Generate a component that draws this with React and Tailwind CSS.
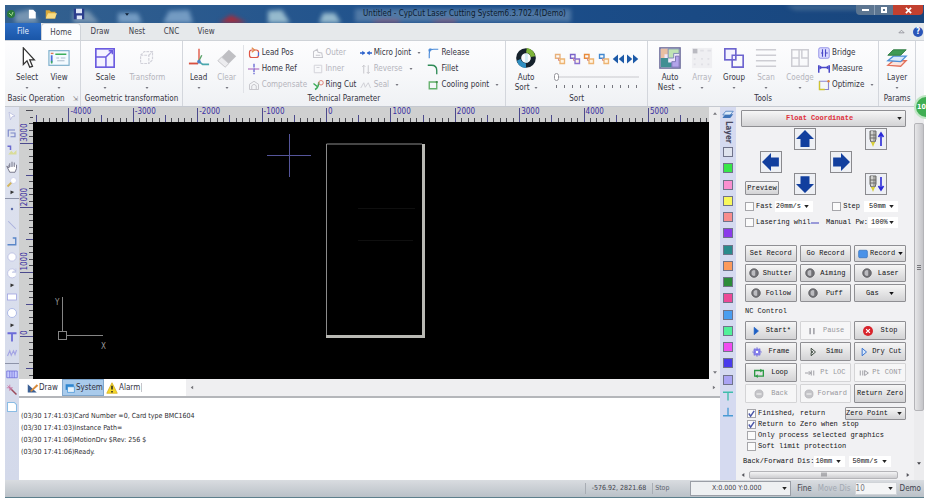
import { useState } from 'react';

const serifMono = "font-['Liberation_Mono',monospace]";

const swatches = [
    ['White', 'bg-[#dfe3ee]'], ['Green', 'bg-[#37e64a]'], ['Pink', 'bg-[#f98fd0]'], ['Yellow', 'bg-[#f8f85e]'],
    ['Salmon', 'bg-[#f88d8d]'], ['Purple', 'bg-[#8a3bea]'], ['Teal', 'bg-[#2a8a8c]'], ['Orange', 'bg-[#fb9a5e]'],
    ['Forest', 'bg-[#2b8b3a]'], ['Magenta', 'bg-[#ec4a98]'], ['Blue', 'bg-[#4a9df0]'], ['Mint', 'bg-[#52f09a]'],
    ['Fuchsia', 'bg-[#f04cf0]'], ['Indigo', 'bg-[#4a3bec]'], ['Lavender', 'bg-[#aaa4f4]'],
];

const logLines = [
    '(03/30 17:41:03)Card Number =0, Card type BMC1604',
    '(03/30 17:41:03)Instance Path=',
    '(03/30 17:41:06)MotionDrv $Rev: 256 $',
    '(03/30 17:41:06)Ready.',
];

function Icon({ box = 16, className = 'size-3', children }) {
    return (
        <svg viewBox={`0 0 ${box} ${box}`} className={`shrink-0 ${className}`} fill="none" aria-hidden="true">
            {children}
        </svg>
    );
}

function Caret({ className = 'h-[3px] w-[5px]' }) {
    return (
        <svg viewBox="0 0 6 4" className={`shrink-0 ${className}`} aria-hidden="true">
            <path d="M0 0h6L3 4z" fill="currentColor" />
        </svg>
    );
}

/* ---------- ribbon ---------- */

function Group({ title, className, children }) {
    return (
        <section className={`flex min-w-0 flex-col border-r border-[#d3d6dc] ${className}`}>
            <div className="flex flex-1 items-start px-1 pt-1">{children}</div>
            <h2 className="pb-[2px] text-center leading-[10px] whitespace-nowrap text-[#34343f]">{title}</h2>
        </section>
    );
}

function BigButton({ label, label2, icon, disabled, className = 'w-8' }) {
    return (
        <button type="button" disabled={disabled} className={`flex flex-col items-center leading-[10px] text-[#34343f] disabled:text-[#b4b4bc] ${className}`}>
            <Icon box={24} className="mb-1 mt-[2px] size-[22px]">{icon}</Icon>
            <span>{label}</span>
            <span className="flex h-[9px] items-center gap-1 leading-[9px]">{label2}<span className="text-[#777780]"><Caret className="h-[2px] w-1" /></span></span>
        </button>
    );
}

function SmallButton({ label, icon, disabled, caret }) {
    return (
        <button type="button" disabled={disabled} className="flex h-4 items-center gap-[2px] whitespace-nowrap leading-[10px] text-[#34343f] disabled:text-[#b4b4bc]">
            <Icon>{icon}</Icon>
            <span>{label}</span>
            {caret && <span className="pl-1 text-[#777780]"><Caret className="h-[2px] w-1" /></span>}
        </button>
    );
}

function Ribbon() {
    return (
        <div className="flex h-[65px] bg-linear-to-b from-[#fdfdfe] via-[#f7f8fa] to-[#eff1f4] pr-2">
            <Group title={<span className="flex items-center justify-center gap-2">Basic Operation<span className="text-[#888] text-[7px]">⇲</span></span>} className="flex-[76_76_0px]">
                <BigButton label="Select" className="w-9" icon={<path d="M8 1v18l4-4 3 7 3-1-3-7h5z" fill="#fff" stroke="#333" strokeWidth="1.4" />} />
                <BigButton label="View" className="w-7" icon={
                    <>
                        <rect x="1" y="4" width="22" height="16" fill="#f3faff" stroke="#7fb0cc" strokeWidth="1.3" />
                        <path d="M4 9v8" stroke="#4a6ee0" strokeWidth="2" />
                        <path d="M8 8h12M4 15v3" stroke="#3cae5b" strokeWidth="1.6" />
                        <path d="M9 12h3m2 0h5M10 15h8" stroke="#a7b6c8" />
                        <path d="M3 7h3" stroke="#e07a5a" strokeWidth="1.5" />
                    </>
                } />
            </Group>
            <Group title="Geometric transformation" className="flex-[101_101_0px]">
                <BigButton label="Scale" className="w-10" icon={
                    <>
                        <rect x="2" y="2" width="20" height="20" stroke="#6b5be0" strokeWidth="1.8" fill="#f4f2ff" />
                        <path d="M2 11h11v11M13 11l7-7M16 4h4v4" stroke="#6b5be0" strokeWidth="1.6" />
                    </>
                } />
                <BigButton label="Transform" disabled className="w-11" icon={
                    <path d="M5 9h9v9H5zM5 9l4-4h9v9l-4 4M14 9l4-4" stroke="#d2d2da" strokeWidth="1.3" strokeDasharray="3 1" />
                } />
            </Group>
            <Group title="Technical Parameter" className="flex-[325_325_0px]">
                <BigButton label="Lead" className="w-6" icon={
                    <>
                        <path d="M12 2v13" stroke="#e2614f" strokeWidth="1.6" />
                        <path d="M1 18h10" stroke="#d9503f" strokeWidth="2" />
                        <path d="M12 15l3-6" stroke="#5aa36a" strokeWidth="1.6" />
                        <path d="M12 16l4 3h7" stroke="#4aa7ad" strokeWidth="1.8" />
                        <circle cx="12" cy="16" r="2" fill="#4a83c9" />
                    </>
                } />
                <BigButton label="Clear" disabled className="w-8" icon={
                    <>
                        <path d="M2 15L14 3l8 7-12 12z" fill="#bfbfc3" />
                        <path d="M2 15l4-4 8 7-4 4z" fill="#ececef" stroke="#c9c9cd" />
                    </>
                } />
                <div className="grid flex-1 grid-cols-[65fr_49fr_69fr_75fr] border-l border-[#e0e2e7] pl-1">
                    <SmallButton label="Lead Pos" icon={<><rect x="2" y="4" width="12" height="10" rx="3" stroke="#e05545" strokeWidth="1.6" /><path d="M5 1l4 3-4 3" stroke="#e08a45" strokeWidth="1.4" /><path d="M14 7v5" stroke="#4a6ee0" strokeWidth="1.5" /></>} />
                    <SmallButton label="Outer" disabled icon={<path d="M2 14V6l5-3 1 4 5 1 1 6zM5 11h6" stroke="#c6c6cc" strokeWidth="1.4" />} />
                    <SmallButton label="Micro Joint" caret icon={<><path d="M0 8h6m4 0h6" stroke="#2b62cc" strokeWidth="2" /><path d="M3 5v6l4-3zM13 5v6l-4-3z" fill="#2b62cc" /></>} />
                    <SmallButton label="Release" icon={<><path d="M3 15V9c0-4 2-6 6-6h6" stroke="#4a8ad8" strokeWidth="1.5" /><path d="M3 3h3M3 3v3" stroke="#4a8ad8" strokeWidth="2" /></>} />
                    <SmallButton label="Home Ref" icon={<><path d="M8 1v14" stroke="#5656cf" strokeWidth="1.6" strokeDasharray="5 1" /><path d="M0 8h16" stroke="#a35ab8" strokeWidth="1.6" strokeDasharray="7 1" /></>} />
                    <SmallButton label="Inner" disabled icon={<path d="M3 3h10v10H3zM6 6h4" stroke="#d3d3d9" strokeWidth="1.3" />} />
                    <SmallButton label="Reverse" disabled caret icon={<path d="M5 14V3m0 0L3 5m2-2l2 2M11 3v11m0 0l-2-2m2 2l2-2" stroke="#c6c6cc" strokeWidth="1.3" />} />
                    <SmallButton label="Fillet" icon={<path d="M1 3h5c5 0 7 3 7 7v5" stroke="#2f8b57" strokeWidth="1.8" />} />
                    <SmallButton label="Compensate" disabled icon={<path d="M2 14V7l6-4 6 4v7zM5 14V9l3-2 3 2v5" stroke="#c6c6cc" strokeWidth="1.3" />} />
                    <SmallButton label="Ring Cut" icon={<><path d="M4 14c4-2 5-6 5-10" stroke="#3cab58" strokeWidth="2" /><path d="M2 6l5 4" stroke="#3cab58" strokeWidth="2" /><circle cx="12" cy="5" r="3" stroke="#df7d72" strokeWidth="1.3" /></>} />
                    <SmallButton label="Seal" disabled caret icon={<path d="M1 12l4-7 2 6 4-6 3 7" stroke="#cfcfd5" strokeWidth="1.3" />} />
                    <SmallButton label="Cooling point" caret icon={<><path d="M3 4h10v9H3z" stroke="#63b06a" strokeWidth="1.8" /><circle cx="13" cy="4" r="1.5" fill="#3f8a4a" /></>} />
                </div>
            </Group>
            <Group title="Sort" className="flex-[142_142_0px]">
                <BigButton label="Auto" label2="Sort" className="w-8" icon={
                    <>
                        <circle cx="12" cy="12" r="8" stroke="#16222c" strokeWidth="5.5" />
                        <path d="M13 1a11 11 0 0 1 9 9l-5 1c0-3-2-4-5-5z" fill="#7fb53a" />
                        <path d="M12 23A11 11 0 0 1 2 15l4-2c1 3 3 4 6 5z" fill="#2f8ec0" />
                        <path d="M10 8l4-1v10h-3V9z" fill="#d4ecf4" />
                    </>
                } />
                <div className="flex flex-1 flex-col pl-3 pr-1 pt-2">
                    <div className="flex justify-between">
                        {['#e8b07a', '#7a62c8', '#e88a3a', '#3f86cf'].map((c, i) => (
                            <button key={c} type="button" aria-label={`Sort order ${i + 1}`}>
                                <Icon>
                                    <path d="M2 2h6v5H2z" stroke={c} strokeWidth="1.8" />
                                    <path d="M6 7v3h4" stroke="#d88a8a" strokeWidth="1.3" />
                                    <path d="M8 8h6v6H8z" stroke={i === 1 ? '#8a72d0' : '#edb472'} strokeWidth="1.8" fill="#fff4e4" />
                                </Icon>
                            </button>
                        ))}
                        <button type="button" aria-label="Previous"><Icon><path d="M8 2v12L1 8zM16 2v12L9 8z" fill="#1d5aa8" /></Icon></button>
                        <button type="button" aria-label="Next"><Icon><path d="M0 2v12l7-6zM8 2v12l7-6z" fill="#1d5aa8" /></Icon></button>
                    </div>
                    <input
                        type="range"
                        aria-label="Sort position"
                        defaultValue="0"
                        className="mt-2 h-2 w-full appearance-none bg-linear-to-b from-transparent from-40% via-[#b9b9bf] via-50% to-transparent to-60% [&::-webkit-slider-thumb]:h-2 [&::-webkit-slider-thumb]:w-[5px] [&::-webkit-slider-thumb]:appearance-none [&::-webkit-slider-thumb]:rounded-sm [&::-webkit-slider-thumb]:border [&::-webkit-slider-thumb]:border-[#96969c] [&::-webkit-slider-thumb]:bg-white"
                    />
                    <div className="mt-1 flex justify-between px-[2px]">
                        {Array.from({ length: 11 }, (_, i) => <i key={i} className="h-[3px] w-px bg-[#77777f]" />)}
                    </div>
                </div>
            </Group>
            <Group title="Tools" className="flex-[232_232_0px]">
                <div className="flex flex-1 justify-between pl-[2px]">
                    <BigButton label="Auto" label2="Nest" className="w-8" icon={
                        <>
                            <rect x="1" y="1" width="22" height="22" fill="#efe7fa" stroke="#6d6d9a" strokeWidth="1.6" />
                            <path d="M2 2h8v6H6v4H2z" fill="#e8bfa2" />
                            <path d="M10 2h12v5h-6v5h-6z" fill="#c0e4b4" stroke="#7a86b4" />
                            <path d="M2 12h8v5h4v5H2z" fill="#3f8f93" />
                            <path d="M14 16h4v-6h4v12h-8z" fill="#b3a4ea" stroke="#7a72b4" />
                        </>
                    } />
                    <BigButton label="Array" disabled className="w-8" icon={<><rect x="1" y="1" width="22" height="22" fill="#efeff2" /><rect x="2" y="2" width="5" height="5" fill="#b9b9c0" /><path d="M10 4h4m4 0h4M4 12v2m0 4v2M12 12v2m7-2v2m-7 4v2m7-2v2" stroke="#e0e0e5" strokeWidth="2" /></>} />
                    <BigButton label="Group" className="w-8" icon={<><rect x="2" y="2" width="12" height="12" fill="#f3f2ff" stroke="#6d64cf" strokeWidth="1.8" /><path d="M14 9h8v13H10v-8" stroke="#6d64cf" strokeWidth="1.8" /><path d="M10 14V9h4" stroke="#6d64cf" strokeWidth="1.5" /></>} />
                    <BigButton label="Scan" disabled className="w-8" icon={<path d="M1 3h22M1 9h22M1 15h22M1 21h22" stroke="#cdcdd3" strokeWidth="1.8" />} />
                    <BigButton label="Coedge" disabled className="w-9" icon={<path d="M3 3h8v18H3zM11 3h10v18H11M3 12h8m3-9v9h7" stroke="#cdcdd3" strokeWidth="1.6" />} />
                    <div className="flex w-15 flex-col">
                        <SmallButton label="Bridge" icon={<><rect x="1" y="1" width="14" height="14" rx="2" fill="#dcdcff" stroke="#7a78e0" /><path d="M6 3v10M10 3v10M4 8h3m3 0h3" stroke="#4a48c8" strokeWidth="1.5" /></>} />
                        <SmallButton label="Measure" icon={<><path d="M1 3v10M15 3v10" stroke="#4a48c8" strokeWidth="2" /><path d="M2 6h12" stroke="#4a48c8" strokeWidth="2" /><path d="M2 3l4 3-4 3zM14 3l-4 3 4 3z" fill="#4a48c8" /></>} />
                        <SmallButton label="Optimize" caret icon={<><path d="M2 3h12v11H2z" stroke="#8d86cf" strokeWidth="1.5" /><path d="M2 3v11h7" stroke="#d0c62e" strokeWidth="1.8" /><circle cx="14" cy="3" r="1.6" fill="#e0813a" /></>} />
                    </div>
                </div>
            </Group>
            <Group title="Params" className="flex-[36_36_0px]">
                <BigButton label="Layer" className="w-full" icon={
                    <>
                        <path d="M2 20l6-5h14l-6 6z" fill="#fbe4de" stroke="#e2705a" strokeWidth="1.4" />
                        <path d="M2 15l6-5h14l-6 6z" fill="#d7e8fb" stroke="#4a8fd8" strokeWidth="1.4" />
                        <path d="M2 9l6-6h14l-6 6z" fill="#3e9a54" stroke="#2f7a42" />
                    </>
                } />
            </Group>
        </div>
    );
}

/* ---------- drawing board ---------- */

function TopRuler() {
    const ticks = [];
    for (let i = -45; i <= 60; i++) ticks.push(i);
    return (
        <svg className="h-[15px] w-full bg-[#cfd0d0]" aria-hidden="true">
            {ticks.map((i) => {
                const x = Math.round(307 + i * 6.44) + 0.5;
                const top = i % 10 === 0 ? 1 : i % 5 === 0 ? 8 : 11;
                return <path key={i} d={`M${x} ${top}V15`} stroke={i % 5 === 0 ? '#4b4a8c' : '#4a4a52'} />;
            })}
            {[-4, -3, -2, -1, 0, 1, 2, 3, 4, 5].map((k) => (
                <text key={k} x={309 + k * 64.4} y="7" fontSize="8" fill="#3a2fa2">{k * 1000}</text>
            ))}
            <path d="M7 3.5h7M11 10.5h3" stroke="#4a4a52" />
        </svg>
    );
}

function SideRuler() {
    const ticks = [];
    for (let i = -6; i <= 33; i++) ticks.push(i);
    return (
        <svg className="w-[14px] shrink-0 self-stretch bg-[#cfd0d0]" aria-hidden="true">
            {ticks.map((i) => {
                const y = Math.round(214 - i * 6.44) + 0.5;
                const left = i % 10 === 0 ? 1 : i % 5 === 0 ? 7 : 10;
                return <path key={i} d={`M${left} ${y}H14`} stroke={i % 5 === 0 ? '#4b4a8c' : '#4a4a52'} />;
            })}
            {[0, 1, 2, 3].map((k) => (
                <text key={k} transform={`translate(8 ${213 - k * 64.4}) rotate(-90)`} fontSize="8" fill="#3a2fa2">{k * 1000}</text>
            ))}
        </svg>
    );
}

function Board() {
    return (
        <svg className="min-w-0 flex-1 bg-black" role="img" aria-label="Drawing board">
            <path d="M293.500 214V22H389" stroke="#8b8b8b" fill="none" />
            <path d="M293 214.500H390.500V22" stroke="#b9b9b4" strokeWidth="3" fill="none" />
            <path d="M325 86.500h57M325 118.500h55" stroke="#0f0f0f" />
            <path d="M234 33.500h44M256.500 12v43" stroke="#55559a" />
            <g stroke="#858585" fill="none">
                <path d="M29.500 209V175M34 213.500H70" />
                <rect x="25.500" y="209.500" width="8" height="8" />
            </g>
            <text x="22" y="183" fontSize="8" fill="#9a9a9a">Y</text>
            <text x="68" y="227" fontSize="8" fill="#9a9a9a">X</text>
        </svg>
    );
}

const drawTools = [
    ['Pick', 'h-[17px]', <path d="M4 3l8 5-4 1-2 4z" fill="#fff" stroke="#b4b8dc" />],
    ['Edit node', 'h-[17px]', <path d="M3 13V4h9M6 8h6v5H6" stroke="#7b86c8" strokeWidth="1.5" />],
    ['Order', 'h-[17px]', <><path d="M2 3h4v5" stroke="#6a6ad0" strokeWidth="2" /><path d="M3 14l4-5 3 3 4-4v6z" fill="#d9dc9a" /></>],
    ['Pan', 'h-[17px]', <path d="M4 9V5m0 4L1 7l4 8h7l2-5V5m-3 3V2M8 8V1M5 8V3" stroke="#77778a" strokeWidth="1.3" fill="#fff" />],
    ['Zoom', 'h-[13px]', <><circle cx="10" cy="6" r="4" fill="#fff" stroke="#c8cce8" /><path d="M7 9l-5 5" stroke="#d2b45a" strokeWidth="2.4" /></>],
    ['Zoom more', 'h-2', <path d="M6 6l5 2-5 3z" fill="#333" />],
    null,
    ['Point', 'h-4', <circle cx="8" cy="8" r="1.6" fill="#5a6aa8" />],
    ['Line', 'h-4', <path d="M3 3l10 10" stroke="#aab0dc" strokeWidth="1.4" />],
    ['Polyline', 'h-4', <path d="M2 13h11V4H9" stroke="#5a86c8" strokeWidth="1.8" />],
    ['Circle', 'h-4', <circle cx="8" cy="8" r="5.500" fill="#fff" stroke="#b4b8e0" />],
    ['Arc', 'h-4', <path d="M13 5a6 6 0 1 0 0 7M13 2v5H8" fill="#fff" stroke="#b4b8e0" />],
    ['Arc more', 'h-2', <path d="M6 6l5 2-5 3z" fill="#333" />],
    ['Rectangle', 'h-4', <rect x="2" y="4" width="12" height="8" fill="#fff" stroke="#9a9ee0" />],
    ['Ellipse', 'h-4', <circle cx="8" cy="8" r="6" fill="#fff" stroke="#9aa8e0" />],
    ['Shape more', 'h-2', <path d="M6 6l5 2-5 3z" fill="#333" />],
    ['Text', 'h-4', <path d="M2 3h12M8 3v11" stroke="#6a6ad8" strokeWidth="2.4" />],
    ['Text path', 'h-4', <path d="M2 12l3-7 2 6 3-6 2 5 2-6" stroke="#a4a4e4" strokeWidth="1.5" />],
    null,
    ['Library', 'h-4', <path d="M1 4h14v9H1zM5 4v9M8 4v9M11 4v9" fill="#c8ccff" stroke="#6a6ad8" />],
    ['Wand', 'h-4', <><path d="M6 6l8 8" stroke="#9a4a5a" strokeWidth="2" /><path d="M5 1v8M1 5h8M2 2l6 6" stroke="#c86a9a" /></>],
    ['Page', 'h-[17px]', <path d="M2 2h9l3 3v9H2z" fill="#fff" stroke="#8abce4" strokeWidth="1.4" />],
];

function DrawToolbar() {
    return (
        <nav aria-label="Draw tools" className="flex w-[14px] shrink-0 flex-col items-center bg-linear-to-b from-[#dfe3ef] to-[#d3d9ea]">
            {drawTools.map((t, i) => t ? (
                <button key={i} type="button" aria-label={t[0]} className={`flex w-full items-center justify-center ${t[1]}`}>
                    <Icon>{t[2]}</Icon>
                </button>
            ) : <hr key={i} className="my-[2px] w-full border-[#8d93a8]" />)}
        </nav>
    );
}

function LayerBar() {
    return (
        <aside aria-label="Layer" className="flex w-4 shrink-0 flex-col items-center bg-[#d5daf0]">
            <Icon className="mt-[2px] size-3">
                <path d="M1 11l4-4h10l-4 5H1z" fill="#3f74b8" />
                <path d="M1 8l4-5h10l-4 5z" fill="#dceaf8" stroke="#3f74b8" />
            </Icon>
            <span className="my-[2px] h-6 font-bold leading-[10px] text-[#4a4a60] [writing-mode:vertical-rl]">Layer</span>
            <div className="flex h-[274px] flex-col items-center justify-between py-[2px]">
                {swatches.map(([name, color]) => (
                    <button key={name} type="button" aria-label={`${name} layer`} className={`size-[10px] border border-[#70738a] ${color}`} />
                ))}
                <button type="button" aria-label="Move to top" className="flex size-[10px]"><Icon className="size-[10px]"><path d="M0 2h16M8 2v13" stroke="#3fbdac" strokeWidth="2.200" /></Icon></button>
                <button type="button" aria-label="Move to bottom" className="flex size-[10px]"><Icon className="size-[10px]"><path d="M0 14h16M8 1v13" stroke="#4a9ad4" strokeWidth="2.200" /></Icon></button>
            </div>
        </aside>
    );
}

/* ---------- control panel ---------- */

const face = 'border border-[#8f8f93] bg-linear-to-b from-[#f6f6f6] to-[#d3d3d5] rounded-[1px]';

function Drop({ label, value, className = '', box = 'border-transparent bg-white', align = '' }) {
    return (
        <span className={`relative inline-flex ${className}`}>
            <select aria-label={label} className={`w-full appearance-none border pr-2 outline-none ${box} ${align}`}>
                <option>{value}</option>
            </select>
            <span className="pointer-events-none absolute inset-y-0 right-1 flex items-center text-[#222]"><Caret /></span>
        </span>
    );
}

function ArrowButton({ label, turn, className = '' }) {
    return (
        <button type="button" aria-label={label} className={`flex size-[22px] items-center justify-center border border-[#8a8a8e] bg-[#eef0f4] ${className}`}>
            <Icon className={`size-[18px] ${turn}`}><path d="M8 0l8 8h-4v7H4V8H0z" fill="#123f9e" /></Icon>
        </button>
    );
}

function TorchButton({ label, down, className = '' }) {
    return (
        <button type="button" aria-label={label} className={`flex size-[22px] items-center justify-center border border-[#8a8a8e] bg-[#eef0f4] ${className}`}>
            <Icon box={20} className="size-5">
                <path d="M4 2h6v8l-1 3H5l-1-3z" fill="#a9a9a6" stroke="#6a6a68" />
                <path d="M6 2v10" stroke="#e6e6e2" strokeWidth="1.4" />
                <path d="M4 6h6M4 9h6" stroke="#6a6a68" />
                <path d="M5 13h4l-2 5z" fill="#d8cf38" />
                <path d={down ? 'M15 3v12M12.500 12l2.500 4 2.500-4' : 'M15 17V5M12.500 8L15 4l2.500 4'} stroke="#2a2ad8" strokeWidth="1.6" />
            </Icon>
        </button>
    );
}

function PanelButton({ label, icon, disabled, caret, className = 'h-[18px]' }) {
    return (
        <button type="button" disabled={disabled} className={`flex items-center justify-evenly whitespace-nowrap text-[#111114] disabled:border-[#d4d4d6] disabled:bg-none disabled:bg-[#f6f6f7] disabled:text-[#96969c] ${face} ${className}`}>
            {icon && <Icon className="size-[10px]">{icon}</Icon>}
            <span>{label}</span>
            {caret && <Caret />}
        </button>
    );
}

function Tick({ label, checked }) {
    const [on, setOn] = useState(!!checked);
    return (
        <label className="flex items-center gap-[2px] whitespace-nowrap">
            <span className="relative flex">
                <input type="checkbox" checked={on} onChange={() => setOn(!on)} className="size-[9px] appearance-none border border-[#a6a6aa] bg-[#fbfbfb]" />
                {on && <svg viewBox="0 0 10 10" className="pointer-events-none absolute inset-0 size-[9px]"><path d="M2 5l2 3 4-6" stroke="#4a56a8" strokeWidth="1.6" fill="none" /></svg>}
            </span>
            {label}
        </label>
    );
}

function Grip() {
    return <i className="h-px w-1 bg-[#77777c]" />;
}

const lamp = (
    <>
        <circle cx="8" cy="8" r="7" fill="#707074" stroke="#55555a" />
        <path d="M4 8a4 4 0 0 1 6-4v8a4 4 0 0 1-6-4z" fill="#bcbcc0" />
    </>
);
const grayLamp = <><circle cx="8" cy="8" r="6.500" fill="#c4c4c8" stroke="#acacb0" /><path d="M4 8h8" stroke="#eee" strokeWidth="2" /></>;

function ControlPanel() {
    return (
        <aside className={`flex w-[188px] shrink-0 bg-[#f1f1f3] text-[7px] leading-[9px] text-[#111114] ${serifMono}`}>
            <div className="flex min-w-0 flex-1 flex-col pl-[5px]">
                <div className="flex flex-1 flex-col pr-2 pt-[3px]">
                    <Drop label="Coordinate system" value="Float Coordinate" className="h-[17px]" box={`font-bold text-[#e0303a] ${face}`} align="[text-align-last:center]" />
                    <div className="mt-px grid grid-cols-[53px_22px_36px_35px] grid-rows-[22px_23px_22px] items-center">
                        <ArrowButton label="Up" turn="" className="col-start-2" />
                        <TorchButton label="Torch up" className="col-start-4 justify-self-end" />
                        <ArrowButton label="Left" turn="-rotate-90" className="col-start-1 mr-3 justify-self-end" />
                        <ArrowButton label="Right" turn="rotate-90" className="col-start-3 justify-self-end" />
                        <button type="button" className={`col-start-1 ml-1 h-[14px] w-[34px] self-end ${face}`}>Preview</button>
                        <ArrowButton label="Down" turn="rotate-180" />
                        <TorchButton label="Torch down" down className="col-start-4 justify-self-end" />
                    </div>
                    <div className="ml-1 mt-[6px] flex h-[11px] items-center justify-between">
                        <span className="flex items-center gap-[2px]"><Tick label="Fast" /><Drop label="Fast speed" value="20mm/s" className="w-[38px]" /></span>
                        <span className="flex items-center gap-1 pr-2"><Tick label="Step" /><Drop label="Step length" value="50mm" className="w-[34px]" align="pl-1" /></span>
                    </div>
                    <div className="ml-1 mt-[5px] flex h-[11px] items-center justify-between">
                        <span className="flex items-center"><Tick label="Lasering whil" /><i className="h-[2px] w-2 bg-[#9a9ad8]" /></span>
                        <span className="flex items-center pr-2"><span className="whitespace-nowrap">Manual Pw:</span><Drop label="Manual power" value="100%" className="w-[30px]" align="pl-[2px]" /></span>
                    </div>
                    <div className="ml-1 mt-[17px] grid grid-cols-3 gap-x-[3px] gap-y-[2px]">
                        <PanelButton label="Set Record" className="h-[17px]" />
                        <PanelButton label="Go Record" className="h-[17px]" />
                        <PanelButton label="Record" caret className="h-[17px]" icon={<rect x="1" y="2" width="14" height="12" rx="2" fill="#4a92e8" stroke="#2a68b8" />} />
                        <PanelButton label="Shutter" icon={lamp} />
                        <PanelButton label="Aiming" icon={lamp} />
                        <PanelButton label="Laser" icon={lamp} />
                        <PanelButton label="Follow" icon={lamp} />
                        <PanelButton label="Puff" icon={lamp} />
                        <PanelButton label="Gas" caret />
                    </div>
                    <h3 className="ml-1 mt-1 h-[14px] pt-[1px]">NC Control</h3>
                    <div className="ml-1 mt-px grid auto-rows-[19px] grid-cols-3 gap-x-[3px] gap-y-[2px]">
                        <PanelButton className="" label="Start*" icon={<path d="M5 2l7 6-7 6z" fill="#1d5fc4" stroke="#1d5fc4" />} />
                        <PanelButton className="" label="Pause" disabled icon={<path d="M5 3v10M11 3v10" stroke="#a0a0a6" strokeWidth="2.500" />} />
                        <PanelButton className="" label="Stop" icon={<><circle cx="8" cy="8" r="8" fill="#d8242c" /><path d="M5 5l6 6M11 5l-6 6" stroke="#fff" strokeWidth="2" /></>} />
                        <PanelButton className="" label="Frame" icon={<><rect x="3" y="3" width="10" height="10" fill="#8a84ee" stroke="#6a64d8" strokeDasharray="3 1" /><path d="M8 0v16M0 8h16" stroke="#6a64d8" /><circle cx="8" cy="8" r="2" fill="#fff" /></>} />
                        <PanelButton className="" label="Simu" icon={<path d="M5 2l7 6-7 6V9l3-1-3-1z" stroke="#37443a" strokeWidth="1.5" />} />
                        <PanelButton className="" label="Dry Cut" icon={<path d="M5 2l7 6-7 6z" fill="#d8e8fc" stroke="#3a74d0" strokeWidth="1.6" />} />
                        <PanelButton className="" label="Loop" icon={<><path d="M1 4h14v9H1z" stroke="#2c9a44" strokeWidth="2.200" /><path d="M10 1l4 3-4 3zM6 10l-4 3 4 3z" fill="#2c9a44" /></>} />
                        <PanelButton className="" label="Pt LOC" disabled icon={<path d="M0 8h10M10 4v8M14 4v8M6 5l3 3-3 3" stroke="#a0a0a6" strokeWidth="1.600" />} />
                        <PanelButton className="" label="Pt CONT" disabled icon={<path d="M2 4v8M6 4v8M9 4v8l6-4z" stroke="#a0a0a6" strokeWidth="1.600" />} />
                        <PanelButton className="" label="Back" disabled icon={grayLamp} />
                        <PanelButton className="" label="Forward" disabled icon={grayLamp} />
                        <PanelButton className="" label="Return Zero" />
                    </div>
                    <div className="ml-[6px] mt-1 flex flex-col">
                        <div className="flex h-[13px] items-center justify-between">
                            <Tick label="Finished, return" checked />
                            <Drop label="Return position" value="Zero Point" className="h-[13px] w-[61px]" box={face} />
                        </div>
                        <div className="flex flex-col gap-[2px]">
                            <Tick label="Return to Zero when stop" checked />
                            <Tick label="Only process selected graphics" />
                            <Tick label="Soft limit protection" />
                        </div>
                    </div>
                    <div className="ml-[2px] mt-[5px] flex items-center">
                        <span className="whitespace-nowrap">Back/Forward Dis:</span>
                        <Drop label="Back or forward distance" value="10mm" className="w-[31px]" />
                        <Drop label="Back or forward speed" value="50mm/s" className="ml-1 w-[42px]" align="pl-[2px]" />
                    </div>
                </div>
                <div className="mb-px flex h-[9px] items-center gap-1 text-[#55555c]">
                    <Caret className="size-1 rotate-90" />
                    <span className="flex h-2 flex-1 items-center justify-center rounded-xs border border-[#b4b4b8] bg-linear-to-b from-[#f4f4f5] to-[#cdcdd0]">
                        <span className="flex rotate-90 flex-col gap-px"><Grip /><Grip /><Grip /></span>
                    </span>
                    <Caret className="mx-1 size-1 -rotate-90" />
                </div>
            </div>
            <div className="flex w-[10px] shrink-0 flex-col items-center bg-[#ececee] pb-[15px] text-[#44444a]">
                <span className="mb-auto mt-4 flex h-[288px] w-full flex-col items-center justify-center gap-px rounded-xs border border-[#b4b4b8] bg-linear-to-r from-[#e6e6e8] to-[#c4c4c8]">
                    <Grip /><Grip /><Grip />
                </span>
                <Caret className="h-[3px] w-1" />
            </div>
        </aside>
    );
}

/* ---------- frame ---------- */

function TitleBar() {
    return (
        <header className="relative flex h-[18px] items-center overflow-hidden bg-linear-to-r from-[#34618f] via-[#1c4f8c] to-[#18457c]">
            <svg className="absolute inset-0 size-full blur-[2px]" aria-hidden="true">
                <path d="M10 18V8l16-4 8 14zM68 18V6h16l10 12z" fill="#93abc0" opacity=".7" />
                <path d="M113 18V8h20l4 10zM158 18l6-12 20-1 4 13z" fill="#86abd0" opacity=".8" />
                <path d="M214 18l12-8 16 8z" fill="#a52c3c" />
                <path d="M263 18V6l14-1 8 13zM314 18l4-10h12l6 10z" fill="#a9cbd8" opacity=".85" />
                <path d="M366 18l8-4h18l4 4zM425 18l10-4h16v4z" fill="#8d3450" />
                <path d="M350 4h216v13H350z" fill="#6f93b8" opacity=".6" />
                <path d="M780 0h140v5H790z" fill="#5e7f9f" opacity=".6" />
            </svg>
            <div className="relative flex items-center gap-2 pl-[2px]">
                <Icon className="size-2"><circle cx="8" cy="8" r="8" fill="#2a7a3c" /><path d="M4 6l5 5 3-7" stroke="#a6dc92" strokeWidth="2" /></Icon>
                <button type="button" aria-label="New" className="ml-1"><Icon className="size-[10px]"><path d="M3 1h7l4 4v10H3z" fill="#fff" /></Icon></button>
                <button type="button" aria-label="Open"><Icon><path d="M1 14V3h5l2 2h6v9z" fill="#d8a93a" /><path d="M1 14l3-7h12l-3 7z" fill="#f8dc84" /></Icon></button>
                <button type="button" aria-label="Save" className="ml-2"><Icon><path d="M1 1h14v14H1z" fill="#2a3c8c" /><path d="M4 1h8v6H4zM5 10h7v5H5z" fill="#dfe6f8" /></Icon></button>
                <span className="ml-8 text-[#0f2036]"><Caret className="h-[3px] w-1" /></span>
            </div>
            <h1 className="absolute inset-x-0 text-center text-[8px] text-[#0d1b2c]">Untitled - CypCut Laser Cutting System6.3.702.4(Demo)</h1>
            <div className="relative ml-auto flex self-start pr-px">
                <button type="button" aria-label="Minimize" className="flex h-[10px] w-[18px] items-center justify-center rounded-bl-sm bg-[#5d7691]"><i className="h-[2px] w-[7px] bg-white" /></button>
                <button type="button" aria-label="Restore" className="flex h-[10px] w-[19px] items-center justify-center border-l border-[#8ba0b6] bg-[#5d7691]"><i className="size-[6px] border-2 border-white" /></button>
                <button type="button" aria-label="Close" className="flex h-[10px] w-[30px] items-center justify-center rounded-br-sm bg-[#c2402f] text-white"><Icon className="size-[7px]"><path d="M2 2l12 12M14 2L2 14" stroke="currentColor" strokeWidth="4" /></Icon></button>
            </div>
        </header>
    );
}

export default function App() {
    const [tab, setTab] = useState('Home');
    return (
        <div className="relative min-h-screen overflow-hidden bg-white pb-[2px] pl-[5px] pr-[2px] pt-[5px] font-['DejaVu_Sans_Condensed','DejaVu_Sans',sans-serif] text-[8px]">
            <div className="flex min-h-[493px] flex-col">
                <TitleBar />
                <div className="flex h-[18px] items-stretch border-b border-[#cfd3d8] bg-[#e6e9eb]">
                    <button type="button" className="w-9 bg-linear-to-b from-[#2c6dc4] to-[#1a56a8] text-[#e8f0fc]">File</button>
                    {[['Home', 'w-10'], ['Draw', 'w-[38px]'], ['Nest', 'w-9'], ['CNC', 'w-[33px]'], ['View', 'w-9']].map(([name, w]) => (
                        <button key={name} type="button" onClick={() => setTab(name)} className={`pt-px text-[#3e3e4a] ${w} ${tab === name ? 'rounded-t-sm border-x border-t border-[#cfd3d8] bg-[#fcfdfe]' : ''}`}>{name}</button>
                    ))}
                    <div className="ml-auto flex items-center gap-2 pr-px">
                        <button type="button" aria-label="Collapse ribbon"><Icon className="size-[7px]"><path d="M2 11l6-6 6 6z" stroke="#8b8b92" strokeWidth="1.8" /></Icon></button>
                        <button type="button" aria-label="Help" className="flex size-[10px] items-center justify-center rounded-full bg-[#2a55b8] text-[8px] font-bold text-white">?</button>
                    </div>
                </div>
                <Ribbon />
                <main className="flex flex-1 border-t border-[#c5c9d0]">
                    <DrawToolbar />
                    <div className="flex min-w-0 flex-1 flex-col">
                        <div className="flex flex-1">
                            <div className="flex min-w-0 flex-1 flex-col">
                                <TopRuler />
                                <div className="flex min-h-[256px] flex-1">
                                    <SideRuler />
                                    <Board />
                                </div>
                            </div>
                            <div className="flex w-[11px] shrink-0 flex-col items-center justify-between bg-[#f0f0f2] py-[5px] text-[#77777c]">
                                <Caret className="h-[3px] w-1 rotate-180" />
                                <Caret className="h-[3px] w-1" />
                            </div>
                        </div>
                        <div className="flex h-[17px] items-stretch bg-white pl-2 text-[#34343f]">
                            <button type="button" className="flex w-[35px] items-center">
                                <Icon><path d="M1 3v11h12z" fill="#3a5f94" /><path d="M4 12l9-9 2 2-9 8z" fill="#d98b3a" /></Icon>Draw
                            </button>
                            <button type="button" className="flex w-[42px] items-center gap-px border border-[#7fa6cc] bg-[#a9cbec] px-[2px]">
                                <Icon className="size-[10px]"><path d="M1 2h13v9H1z" fill="#2f86d0" /><path d="M4 6h11v9H4z" fill="#e6f2fc" stroke="#2f86d0" /></Icon>System
                            </button>
                            <button type="button" className="my-1 flex w-[38px] items-center gap-px border-r border-[#c5c5ca] pl-[2px]">
                                <Icon><path d="M8 1l7 14H1z" fill="#f4d829" stroke="#d4ac1c" /><path d="M8 5v5m0 2v2" stroke="#222" strokeWidth="2" /></Icon>Alarm
                            </button>
                            <div className="ml-auto flex w-[77%] items-center justify-between bg-[#efeff1] px-1 text-[#77777c]">
                                <Caret className="h-[3px] w-1 rotate-90" />
                                <Caret className="h-[3px] w-1 -rotate-90" />
                            </div>
                        </div>
                        <div className="h-[84px] border-t-2 border-[#b4b6ba] bg-white px-[2px] pt-3 text-[7px] leading-3 text-[#2b2b30]">
                            {logLines.map((line) => <p key={line}>{line}</p>)}
                        </div>
                    </div>
                    <LayerBar />
                    <ControlPanel />
                </main>
                <footer className="flex h-[18px] items-center justify-end border-b border-[#5d7f8c] bg-linear-to-b from-[#d9dce0] to-[#bac1c8] text-[#3f434c]">
                    <span className="border-l border-[#a8adb4] px-[6px] text-[7px]">-576.92, 2821.68</span>
                    <span className="w-[38px] border-l border-[#a8adb4] pl-[2px] text-[7px] text-[#5d636e]">Stop</span>
                    <Drop label="Position" value="X:0.000 Y:0.000" className="h-[15px] w-[101px] text-[7px]" box="border-[#9a9ea6] bg-[#eef0f2]" align="[text-align-last:center]" />
                    <span className="pl-[6px]">Fine</span>
                    <label className="flex items-center gap-1 pl-[6px] text-[#a2a8b2]">
                        Move Dis
                        <Drop label="Move distance" value="10" className="h-[13px] w-[42px]" box="border-[#d0d4d8] bg-[#f4f5f6] text-[#77777e]" />
                    </label>
                    <span className="px-[3px]">Demo</span>
                </footer>
            </div>
            <div className="absolute -right-3 top-[95px] flex size-6 items-center rounded-full border-2 border-[#bfe6c4] bg-[#3fae52] pl-px text-[7px] font-bold text-white">10</div>
        </div>
    );
}
